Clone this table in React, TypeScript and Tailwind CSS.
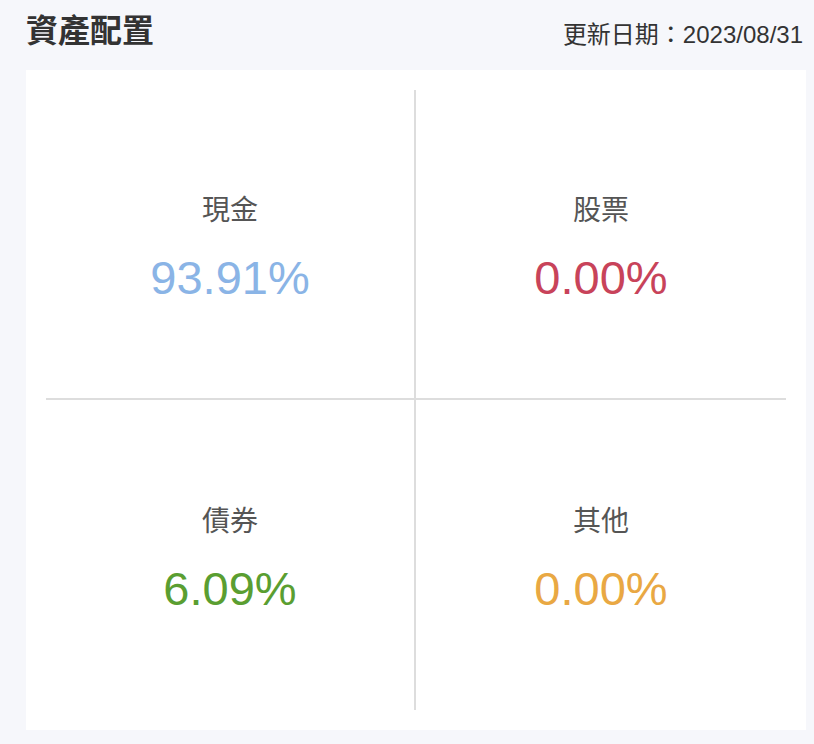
import React from "react";

const items = [
  { label: "現金", value: "93.91%", color: "text-[#8ab4e6]", cls: "border-r-2 border-b-2" },
  { label: "股票", value: "0.00%", color: "text-[#c8435a]", cls: "border-b-2" },
  { label: "債券", value: "6.09%", color: "text-[#5a9e31]", cls: "border-r-2" },
  { label: "其他", value: "0.00%", color: "text-[#e9a843]", cls: "" },
];

export default function App() {
  return (
    <div
      className="w-[814px] h-[744px] bg-[#f6f7fb] pl-[26px] pr-[8px]"
      style={{ fontFamily: '"Liberation Sans", "Noto Sans CJK TC", sans-serif' }}
    >
      <div className="flex items-end justify-between h-[70px] pb-[23px]">
        <h1 className="text-[32px] leading-none font-bold text-[#333333]">資產配置</h1>
        <div className="text-[24px] leading-none text-[#333333] mr-[3px]">更新日期：2023/08/31</div>
      </div>
      <div className="bg-white h-[660px] p-[20px]">
        <div className="grid grid-cols-2 grid-rows-2 h-full">
          {items.map((it) => (
            <div
              key={it.label}
              className={`flex flex-col items-center justify-center pt-[10px] border-[#dddddd] ${it.cls}`}
            >
              <div className="text-[28px] leading-none text-[#555555]">{it.label}</div>
              <div className={`mt-[29px] text-[47px] leading-none ${it.color}`}>{it.value}</div>
            </div>
          ))}
        </div>
      </div>
    </div>
  );
}
